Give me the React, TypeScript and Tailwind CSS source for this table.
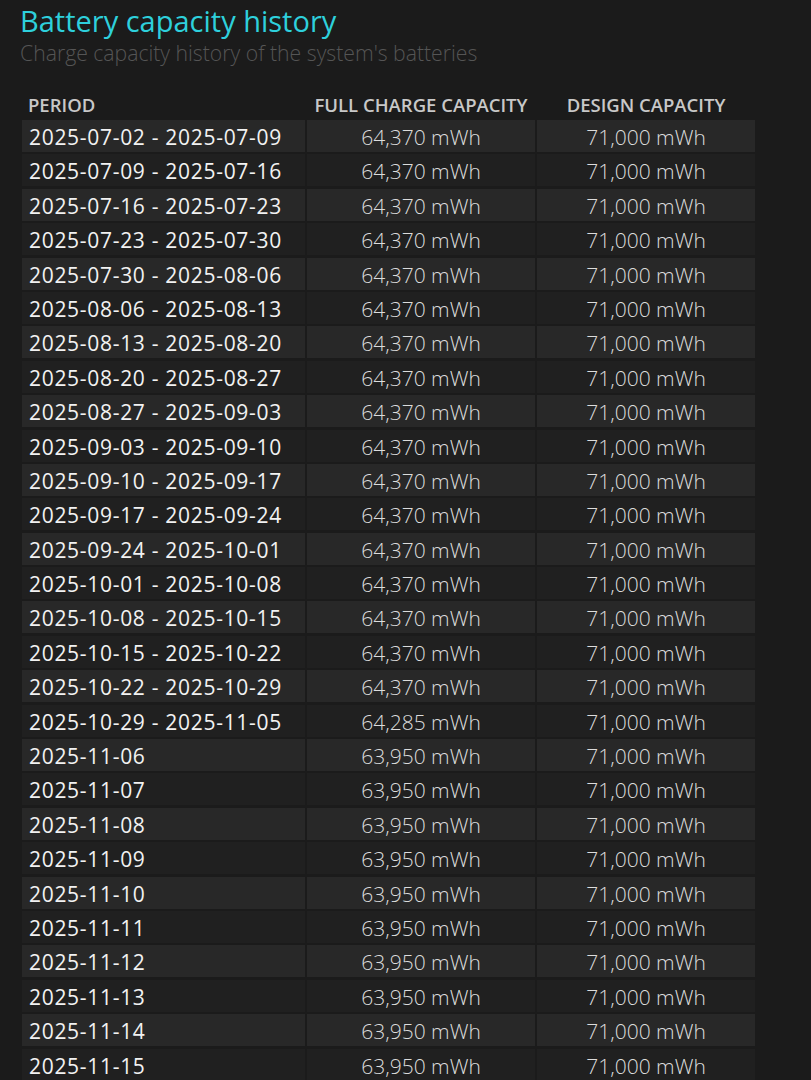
const weekly = [
  ["2025-07-02 - 2025-07-09", "64,370 mWh"],
  ["2025-07-09 - 2025-07-16", "64,370 mWh"],
  ["2025-07-16 - 2025-07-23", "64,370 mWh"],
  ["2025-07-23 - 2025-07-30", "64,370 mWh"],
  ["2025-07-30 - 2025-08-06", "64,370 mWh"],
  ["2025-08-06 - 2025-08-13", "64,370 mWh"],
  ["2025-08-13 - 2025-08-20", "64,370 mWh"],
  ["2025-08-20 - 2025-08-27", "64,370 mWh"],
  ["2025-08-27 - 2025-09-03", "64,370 mWh"],
  ["2025-09-03 - 2025-09-10", "64,370 mWh"],
  ["2025-09-10 - 2025-09-17", "64,370 mWh"],
  ["2025-09-17 - 2025-09-24", "64,370 mWh"],
  ["2025-09-24 - 2025-10-01", "64,370 mWh"],
  ["2025-10-01 - 2025-10-08", "64,370 mWh"],
  ["2025-10-08 - 2025-10-15", "64,370 mWh"],
  ["2025-10-15 - 2025-10-22", "64,370 mWh"],
  ["2025-10-22 - 2025-10-29", "64,370 mWh"],
  ["2025-10-29 - 2025-11-05", "64,285 mWh"],
];

const daily = [
  "2025-11-06",
  "2025-11-07",
  "2025-11-08",
  "2025-11-09",
  "2025-11-10",
  "2025-11-11",
  "2025-11-12",
  "2025-11-13",
  "2025-11-14",
  "2025-11-15",
];

const rows = [
  ...weekly.map(([period, full]) => ({ period, full })),
  ...daily.map((period) => ({ period, full: "63,950 mWh" })),
];

export default function App() {
  return (
    <main
      className="h-[1080px] overflow-hidden bg-[#1b1b1b] pl-[20px] pt-[3px]"
      style={{ fontFamily: '"Open Sans", "Noto Sans", sans-serif' }}
    >
      <h1 className="text-[29px] leading-[36px] text-[#2ed0dc]">
        Battery capacity history
      </h1>
      <p className="text-[21.2px] font-light leading-[28px] text-[#555555]">
        Charge capacity history of the system's batteries
      </p>

      <div className="ml-[2px] mt-[23px] grid grid-cols-[283px_228px_218px] gap-x-[2px] gap-y-[2.4px]">
        <div className="h-[27.6px] pl-[6px] text-[18.5px] font-semibold leading-[30px] text-[#c8c8c8]">
          PERIOD
        </div>
        <div className="h-[27.6px] text-center text-[18.5px] font-semibold leading-[30px] text-[#c8c8c8]">
          FULL CHARGE CAPACITY
        </div>
        <div className="h-[27.6px] text-center text-[18.5px] font-semibold leading-[30px] text-[#c8c8c8]">
          DESIGN CAPACITY
        </div>

        {rows.map((row, i) => {
          const bg = i % 2 === 0 ? "bg-[#282828]" : "bg-[#202020]";
          return [
            <div
              key={`p${i}`}
              className={`${bg} h-[32px] pl-[7px] text-[21px] leading-[34px] tracking-[0.7px] text-[#f2f2f2]`}
            >
              {row.period}
            </div>,
            <div
              key={`f${i}`}
              className={`${bg} h-[32px] text-center text-[21px] font-light leading-[34px] text-[#dcdcdc]`}
            >
              {row.full}
            </div>,
            <div
              key={`d${i}`}
              className={`${bg} h-[32px] text-center text-[21px] font-light leading-[34px] text-[#dcdcdc]`}
            >
              71,000 mWh
            </div>,
          ];
        })}
      </div>
    </main>
  );
}
